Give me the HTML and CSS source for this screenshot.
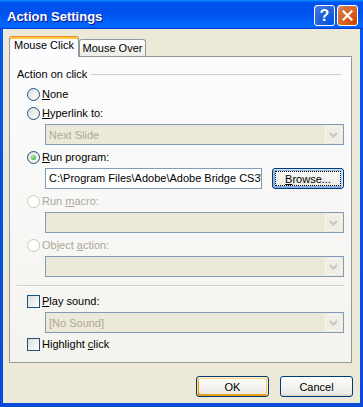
FILE: index.html
```html
<!DOCTYPE html>
<html lang="en">
<head>
  <meta charset="UTF-8">
  <title>Action Settings</title>
  <link rel="stylesheet" href="styles.css">
</head>
<body>
  <div class="window">
    <div class="titlebar">
      <span class="title">Action Settings</span>
      <div class="title-controls">
        <span class="tb tb-help">?</span>
        <span class="tb tb-close">
          <svg width="11" height="11" viewBox="0 0 11 11"><path d="M1.5 1.5 L9.5 9.5 M9.5 1.5 L1.5 9.5" stroke="#fff" stroke-width="2.2" stroke-linecap="square"/></svg>
        </span>
      </div>
    </div>

    <div class="frame">
      <div class="client">
        <div class="tabs">
          <div class="tab tab-active">Mouse Click</div>
          <div class="tab">Mouse Over</div>
        </div>

        <div class="panel">
          <div class="group-label"><span>Action on click</span><span class="rule"></span></div>

          <div class="option"><span class="radio"></span><span><u>N</u>one</span></div>
          <div class="option"><span class="radio"></span><span><u>H</u>yperlink to:</span></div>
          <div class="field combo"><span class="combo-text">Next Slide</span><span class="combo-btn"><svg width="9" height="6" viewBox="0 0 9 6"><polyline points="1,1 4.5,4.5 8,1" fill="none" stroke="#C9C7BA" stroke-width="2"/></svg></span></div>

          <div class="option"><span class="radio checked"></span><span><u>R</u>un program:</span></div>
          <div class="field path-row">
            <div class="textbox">C:\Program Files\Adobe\Adobe Bridge CS3\Bridge.exe</div>
            <button class="btn btn-focus"><u>B</u>rowse...</button>
          </div>

          <div class="option disabled"><span class="radio"></span><span>Run <u>m</u>acro:</span></div>
          <div class="field combo"><span class="combo-text"></span><span class="combo-btn"><svg width="9" height="6" viewBox="0 0 9 6"><polyline points="1,1 4.5,4.5 8,1" fill="none" stroke="#C9C7BA" stroke-width="2"/></svg></span></div>

          <div class="option disabled"><span class="radio"></span><span>Object <u>a</u>ction:</span></div>
          <div class="field combo"><span class="combo-text"></span><span class="combo-btn"><svg width="9" height="6" viewBox="0 0 9 6"><polyline points="1,1 4.5,4.5 8,1" fill="none" stroke="#C9C7BA" stroke-width="2"/></svg></span></div>

          <div class="separator"></div>

          <div class="option"><span class="checkbox"></span><span><u>P</u>lay sound:</span></div>
          <div class="field combo combo-last"><span class="combo-text">[No Sound]</span><span class="combo-btn"><svg width="9" height="6" viewBox="0 0 9 6"><polyline points="1,1 4.5,4.5 8,1" fill="none" stroke="#C9C7BA" stroke-width="2"/></svg></span></div>
          <div class="option"><span class="checkbox"></span><span>Highlight <u>c</u>lick</span></div>
        </div>

        <div class="actions">
          <button class="btn btn-default">OK</button>
          <button class="btn">Cancel</button>
        </div>
      </div>
    </div>
  </div>
</body>
</html>
```

FILE: styles.css
```css
* {
  box-sizing: border-box;
}

body {
  margin: 0;
  font-family: "Liberation Sans", Arial, sans-serif;
  font-size: 11px;
  color: #000;
}

.window {
  width: 363px;
  height: 407px;
  display: flex;
  flex-direction: column;
}

/* title bar */
.titlebar {
  height: 29px;
  flex-shrink: 0;
  display: flex;
  align-items: center;
  justify-content: space-between;
  padding: 2px 5px 0 7px;
  background: linear-gradient(180deg, #0997ff, #0053ee 8%, #0050ee 40%, #06f 88%, #06f 93%, #005bff 95%, #003dd7 96%, #003dd7);
}

.title {
  color: #fff;
  font-weight: bold;
  font-size: 13px;
  padding-top: 1px;
  text-shadow: 1px 1px #0f1089;
}

.title-controls {
  display: flex;
  gap: 2px;
}

.tb {
  width: 21px;
  height: 21px;
  border: 1px solid #fff;
  border-radius: 3px;
  display: flex;
  align-items: center;
  justify-content: center;
}

.tb-help {
  background: radial-gradient(circle at 90% 90%, #0054e9 0%, #2263d5 55%, #4479e4 90%, #a3bbec 100%);
  color: #fff;
  font-weight: bold;
  font-size: 16px;
}

.tb-close {
  background: radial-gradient(circle at 90% 90%, #cc4600 0%, #dc6527 55%, #cd7546 80%, #f0a487 100%);
}

/* frame + client */
.frame {
  flex: 1;
  display: flex;
  padding: 0 3px 4px;
  background: linear-gradient(180deg, #0058ee, #0a4ad9);
}

.client {
  flex: 1;
  display: flex;
  flex-direction: column;
  background: #ece9d8;
  padding: 7px 8px 0 6px;
}

/* tabs */
.tabs {
  display: flex;
  align-items: flex-end;
  height: 20px;
}

.tab {
  width: 67px;
  height: 17px;
  border: 1px solid #919b9c;
  border-bottom: none;
  border-radius: 3px 3px 0 0;
  background: linear-gradient(#fff, #ecebe6);
  text-align: center;
  line-height: 16px;
}

.tab-active {
  width: 70px;
  height: 21px;
  margin-bottom: -1px;
  position: relative;
  z-index: 1;
  background: #fcfcfe;
  border-top: 1px solid #e68b2c;
  box-shadow: inset 0 2px #ffc73c;
  line-height: 17px;
}

.panel {
  height: 307px;
  flex-shrink: 0;
  border: 1px solid #919b9c;
  background: linear-gradient(#fcfcfe, #f4f3ee);
  padding: 10px 7px 0 7px;
}

.group-label {
  display: flex;
  align-items: center;
  height: 13px;
  margin-bottom: 6px;
}

.rule {
  flex: 1;
  height: 1px;
  background: #d0d0bf;
  margin: 1px 3px 0 4px;
}

.option {
  display: flex;
  align-items: center;
  gap: 2px;
  height: 16px;
  padding-left: 10px;
  margin-top: 3px;
}

.option.disabled {
  color: #aca899;
}

.radio {
  width: 13px;
  height: 13px;
  border: 1px solid #1c5180;
  border-radius: 50%;
  background: linear-gradient(135deg, #dcdcd7, #fff);
  display: flex;
  align-items: center;
  justify-content: center;
}

.disabled .radio {
  border-color: #cac8bb;
  background: #fff;
}

.radio.checked::after {
  content: "";
  width: 5px;
  height: 5px;
  border-radius: 50%;
  background: radial-gradient(circle at 35% 35%, #a9f0a5, #21a121);
}

.checkbox {
  width: 13px;
  height: 13px;
  border: 1px solid #1c5180;
  background: linear-gradient(135deg, #dcdcd7, #fff);
}

.field {
  margin: 3px 0 4px 28px;
}

.combo {
  height: 21px;
  border: 1px solid #7f9db9;
  background: #ece9d8;
  display: flex;
  align-items: center;
  color: #aca899;
}

.combo-last {
  margin-bottom: 1px;
}

.combo-text {
  flex: 1;
  padding-left: 3px;
}

.combo-btn {
  width: 17px;
  height: 17px;
  margin-right: 1px;
  border: 1px solid #f8f7f2;
  border-radius: 2px;
  background: #efeee6;
  display: flex;
  align-items: center;
  justify-content: center;
}

.path-row {
  display: flex;
  gap: 10px;
}

.textbox {
  width: 217px;
  height: 21px;
  border: 1px solid #7f9db9;
  background: #fff;
  padding-left: 3px;
  line-height: 19px;
  white-space: nowrap;
  overflow: hidden;
}

.separator {
  height: 2px;
  border-top: 1px solid #d0d0bf;
  border-bottom: 1px solid #fff;
  margin: 8px 0 6px;
}

/* buttons */
.btn {
  width: 73px;
  height: 21px;
  padding: 0;
  border: 1px solid #003c74;
  border-radius: 3px;
  background: linear-gradient(180deg, #fff, #ecebe6 86%, #d6d0c5);
  font-family: inherit;
  font-size: 11px;
  color: #000;
}

.path-row .btn {
  width: 72px;
}

.btn-focus {
  box-shadow: inset -1px 1px #cee7ff, inset 1px 2px #98b8ea, inset -2px 2px #bcd4f6, inset 1px -1px #89ade4, inset 2px -2px #89ade4;
  outline: 1px dotted #000;
  outline-offset: -4px;
}

.btn-default {
  box-shadow: inset -1px 1px #fff0cf, inset 1px 2px #fdd889, inset -2px 2px #fbc761, inset 2px -2px #e5a01a;
}

.actions {
  display: flex;
  justify-content: flex-end;
  gap: 11px;
  margin: 13px -1px 0 0;
}
```
